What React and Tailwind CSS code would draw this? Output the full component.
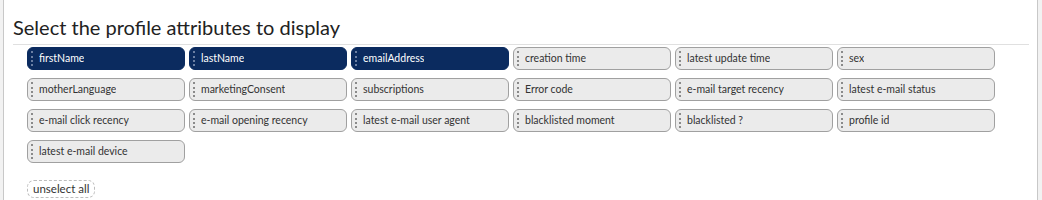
import { useState } from 'react'

const ATTRS = [
  'firstName', 'lastName', 'emailAddress', 'creation time', 'latest update time', 'sex',
  'motherLanguage', 'marketingConsent', 'subscriptions', 'Error code', 'e-mail target recency', 'latest e-mail status',
  'e-mail click recency', 'e-mail opening recency', 'latest e-mail user agent', 'blacklisted moment', 'blacklisted ?', 'profile id',
  'latest e-mail device',
]

function Handle({ active }) {
  return (
    <span
      className={`h-[15px] w-0 shrink-0 border-l-2 border-dotted ${active ? 'border-[#6b7fa3]' : 'border-[#8a8a8a]'}`}
    />
  )
}

export default function App() {
  const [selected, setSelected] = useState(['firstName', 'lastName', 'emailAddress'])

  const toggle = (name) =>
    setSelected(s => (s.includes(name) ? s.filter(n => n !== name) : [...s, name]))

  return (
    <div className="h-[200px] bg-[#f2f2f2] pl-[3px] pr-[4px] font-['Lato','Open_Sans',sans-serif]">
      <div className="h-full bg-white border-x border-[#c8c8c8] pl-[9px] pr-[8px]">
        {/* Title */}
        <h2 className="pt-[14px] pb-[4px] text-[20px] leading-[26px] text-[#222] border-b border-[#e0e0e0]">
          Select the profile attributes to display
        </h2>

        {/* Attribute chips */}
        <div className="pl-[14px] pt-[2px] grid grid-cols-[repeat(6,158px)] gap-x-[4px] gap-y-[8px]">
          {ATTRS.map(name => {
            const on = selected.includes(name)
            return (
              <button
                key={name}
                onClick={() => toggle(name)}
                className={`h-[23px] flex items-center gap-[6px] pl-[3px] rounded-[6px] border text-left text-[10.5px] ${
                  on
                    ? 'bg-[#0b2b5f] border-[#0b2b5f] text-white'
                    : 'bg-[#ebebeb] border-[#a0a0a0] text-[#333]'
                }`}
              >
                <Handle active={on} />
                <span className="truncate">{name}</span>
              </button>
            )
          })}
        </div>

        {/* Footer */}
        <div className="pl-[14px] pt-[12px]">
          <button
            onClick={() => setSelected([])}
            className="h-[18px] px-[5px] rounded-[7px] border border-dashed border-[#bdbdbd] text-[11.5px] leading-none text-[#333]"
          >
            unselect all
          </button>
        </div>
      </div>
    </div>
  )
}
